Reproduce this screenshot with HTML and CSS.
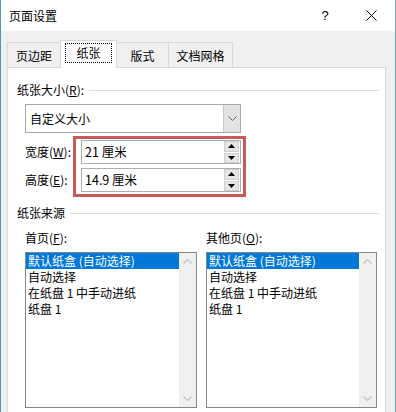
FILE: index.html
```html
<!DOCTYPE html>
<html lang="zh-CN">
<head>
<meta charset="utf-8">
<title>页面设置</title>
<link rel="stylesheet" href="styles.css">
</head>
<body>
<div class="window">
  <div class="titlebar">
    <span class="title">页面设置</span>
    <span class="tb-btn tb-help">?</span>
    <span class="tb-btn tb-close"><svg width="11" height="11" viewBox="0 0 11 11"><path d="M0.5 0.5L10.5 10.5M10.5 0.5L0.5 10.5" stroke="#000" stroke-width="1" fill="none"/></svg></span>
  </div>
  <div class="client">
    <div class="tabs">
      <div class="tab tab-w1">页边距</div>
      <div class="tab tab-active"><span class="focus">纸张</span></div>
      <div class="tab tab-w3">版式</div>
      <div class="tab tab-w4">文档网格</div>
    </div>
    <div class="panel">
      <div class="group-head"><span>纸张大小(<u>R</u>):</span><i class="rule"></i></div>
      <div class="indent">
        <div class="combo">
          <span class="combo-text">自定义大小</span>
          <span class="combo-btn"><svg width="9" height="5" viewBox="0 0 9 5"><path d="M0.5 0.5L4.5 4.5L8.5 0.5" stroke="#606060" stroke-width="1" fill="none"/></svg></span>
        </div>
        <div class="dims">
          <div class="dim-labels">
            <span class="dim-label">宽度(<u>W</u>):</span>
            <span class="dim-label">高度(<u>E</u>):</span>
          </div>
          <div class="dim-box">
            <div class="spin">
              <span class="spin-text">21 厘米</span>
              <span class="spin-btns">
                <span class="sb"><svg width="7" height="4" viewBox="0 0 7 4"><path d="M3.5 0L7 4H0Z" fill="#000"/></svg></span>
                <span class="sb"><svg width="7" height="4" viewBox="0 0 7 4"><path d="M0 0H7L3.5 4Z" fill="#000"/></svg></span>
              </span>
            </div>
            <div class="spin spin-2">
              <span class="spin-text">14.9 厘米</span>
              <span class="spin-btns">
                <span class="sb"><svg width="7" height="4" viewBox="0 0 7 4"><path d="M3.5 0L7 4H0Z" fill="#000"/></svg></span>
                <span class="sb"><svg width="7" height="4" viewBox="0 0 7 4"><path d="M0 0H7L3.5 4Z" fill="#000"/></svg></span>
              </span>
            </div>
          </div>
        </div>
      </div>
      <div class="group-head group-2"><span>纸张来源</span><i class="rule"></i></div>
      <div class="sources">
        <div class="source source-1">
          <div class="src-label">首页(<u>F</u>):</div>
          <div class="listbox">
            <ul class="items">
              <li class="item selected">默认纸盒 (自动选择)</li>
              <li class="item">自动选择</li>
              <li class="item">在纸盘 1 中手动进纸</li>
              <li class="item">纸盘 1</li>
            </ul>
            <div class="vscroll">
              <svg width="9" height="5" viewBox="0 0 9 5"><path d="M0.5 4.5L4.5 0.5L8.5 4.5" stroke="#c2c2c2" stroke-width="1.2" fill="none"/></svg>
              <svg width="9" height="5" viewBox="0 0 9 5"><path d="M0.5 0.5L4.5 4.5L8.5 0.5" stroke="#c2c2c2" stroke-width="1.2" fill="none"/></svg>
            </div>
          </div>
        </div>
        <div class="source source-2">
          <div class="src-label">其他页(<u>O</u>):</div>
          <div class="listbox">
            <ul class="items">
              <li class="item selected">默认纸盒 (自动选择)</li>
              <li class="item">自动选择</li>
              <li class="item">在纸盘 1 中手动进纸</li>
              <li class="item">纸盘 1</li>
            </ul>
            <div class="vscroll">
              <svg width="9" height="5" viewBox="0 0 9 5"><path d="M0.5 4.5L4.5 0.5L8.5 4.5" stroke="#c2c2c2" stroke-width="1.2" fill="none"/></svg>
              <svg width="9" height="5" viewBox="0 0 9 5"><path d="M0.5 0.5L4.5 4.5L8.5 0.5" stroke="#c2c2c2" stroke-width="1.2" fill="none"/></svg>
            </div>
          </div>
        </div>
      </div>
    </div>
  </div>
</div>
</body>
</html>
```

FILE: styles.css
```css
* { box-sizing: border-box; }
html, body { margin: 0; padding: 0; }
body {
  width: 396px;
  height: 412px;
  overflow: hidden;
  background: #fff;
  font-family: "Noto Sans CJK SC", "Noto Sans", sans-serif;
  font-size: 12px;
  color: #000;
}
u { text-decoration: underline; text-underline-offset: 1px; }

.window {
  width: 396px;
  height: 412px;
  border-left: 1px solid #4a9ab6;
  border-right: 1px solid #6aaac2;
  background: #f0f0f0;
  display: flex;
  flex-direction: column;
}

.titlebar {
  height: 31px;
  flex: none;
  background: #fff;
  display: flex;
  align-items: center;
  padding-left: 8px;
}
.title { flex: 1; line-height: 16px; }
.tb-btn {
  width: 46px;
  height: 31px;
  display: flex;
  align-items: center;
  justify-content: center;
}
.tb-help { font-family: "Liberation Sans", sans-serif; font-size: 13px; }
.tb-close { margin-right: 1px; }

.client {
  flex: 1;
  display: flex;
  flex-direction: column;
  padding: 9px 9px 0 6px;
  min-height: 0;
}

.tabs {
  height: 27px;
  flex: none;
  display: flex;
  align-items: flex-end;
  position: relative;
  z-index: 1;
}
.tab {
  height: 25px;
  border: 1px solid #d9d9d9;
  border-bottom: none;
  background: #f0f0f0;
  display: flex;
  align-items: center;
  justify-content: center;
  line-height: 16px;
  padding-top: 1px;
}
.tab-w1 { width: 54px; }
.tab-w3 { width: 53px; margin-left: -1px; }
.tab-w4 { width: 65px; margin-left: -1px; }
.tab-active {
  width: 57px;
  height: 28px;
  margin-left: -1px;
  margin-bottom: -1px;
  background: #fff;
  align-items: flex-start;
  padding-top: 2px;
}
.focus {
  width: 47px;
  height: 20px;
  outline: 1px dotted #000;
  outline-offset: -1px;
  display: flex;
  align-items: center;
  justify-content: center;
}

.panel {
  flex: 1;
  background: #fff;
  border: 1px solid #d9d9d9;
  border-bottom: none;
  padding: 14px 6px 0 9px;
  min-height: 0;
}

.group-head {
  height: 16px;
  line-height: 16px;
  display: flex;
  align-items: center;
}
.rule {
  flex: 1;
  height: 1px;
  background: #dcdcdc;
  margin-left: 5px;
}
.group-2 { margin-top: 8px; }

.indent { margin-left: 8px; }

.combo {
  margin-top: 6px;
  width: 216px;
  height: 29px;
  border: 1px solid #a9a9a9;
  display: flex;
  background: #fff;
}
.combo-text {
  flex: 1;
  padding-left: 4px;
  line-height: 27px;
}
.combo-btn {
  width: 17px;
  background: #e3e3e3;
  border-left: 1px solid #c8c8c8;
  display: flex;
  align-items: center;
  justify-content: center;
}

.dims {
  margin-top: 3px;
  display: flex;
}
.dim-labels {
  width: 48px;
  display: flex;
  flex-direction: column;
  gap: 4px;
  padding-top: 4px;
}
.dim-label { height: 24px; line-height: 24px; }
.dim-box {
  width: 173px;
  border: 3px solid #c75b5c;
  padding: 1px 2px 2px 5px;
}
.spin {
  width: 160px;
  height: 24px;
  border: 1px solid #abadb3;
  display: flex;
  background: #fff;
}
.spin-2 { margin-top: 4px; }
.spin-text {
  flex: 1;
  padding-left: 3px;
  line-height: 22px;
  font-size: 12.5px;
}
.spin-btns {
  width: 16px;
  display: flex;
  flex-direction: column;
  gap: 1px;
  padding: 0 1px 0 0;
}
.sb {
  flex: 1;
  background: #e6e6e6;
  border: 1px solid #cfcfcf;
  display: flex;
  align-items: center;
  justify-content: center;
}

.sources {
  margin-top: 9px;
  margin-left: 8px;
  display: flex;
  gap: 10px;
}
.source-1 { width: 172px; }
.source-2 { width: 171px; margin-left: -1px; }
.src-label {
  height: 16px;
  line-height: 16px;
  margin-bottom: 6px;
}
.listbox {
  height: 156px;
  border: 1px solid #828790;
  display: flex;
  background: #fff;
}
.items {
  flex: 1;
  margin: 0;
  padding: 0;
  list-style: none;
}
.item {
  height: 16px;
  line-height: 16px;
  padding-left: 2px;
  white-space: nowrap;
}
.item.selected {
  background: #0078d7;
  color: #fff;
}
.vscroll {
  width: 17px;
  background: #f0f0f0;
  display: flex;
  flex-direction: column;
  justify-content: space-between;
  align-items: center;
  padding: 6px 0 6px;
}
```
